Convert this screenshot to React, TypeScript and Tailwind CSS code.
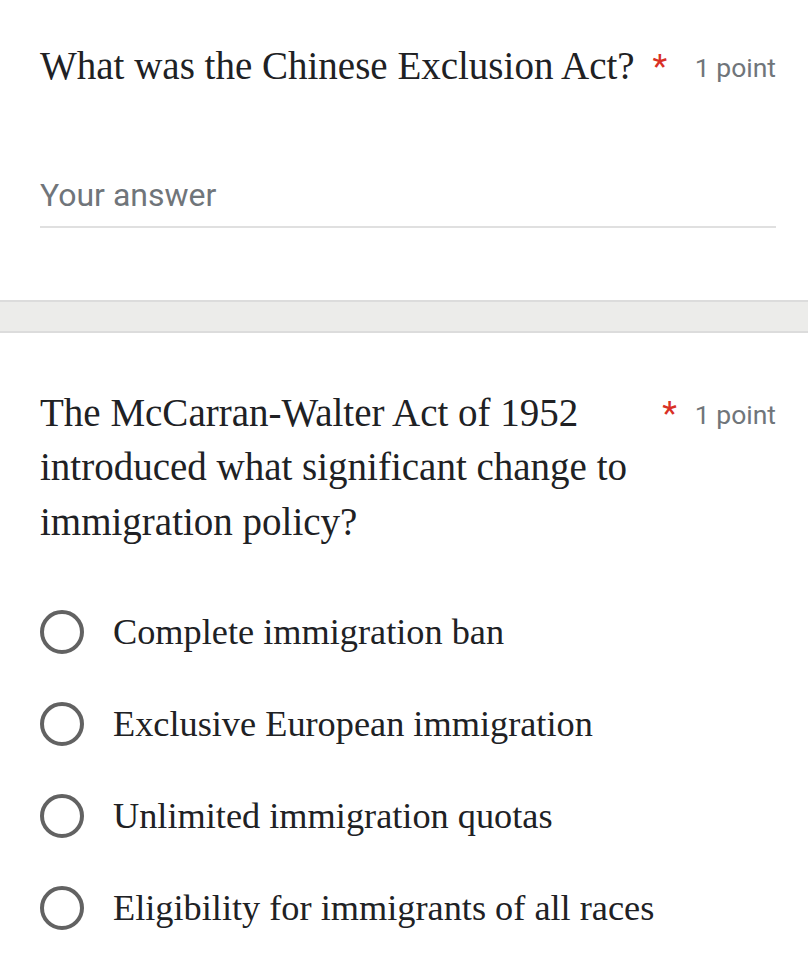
import React from 'react'

const serif = { fontFamily: '"Liberation Serif", "Times New Roman", serif' }
const sans = { fontFamily: 'Roboto, "Liberation Sans", Arial, sans-serif' }

const options = [
  'Complete immigration ban',
  'Exclusive European immigration',
  'Unlimited immigration quotas',
  'Eligibility for immigrants of all races',
]

function QuestionHeader({ title }: { title: string }) {
  return (
    <div className="flex items-start">
      <div className="min-w-0 shrink text-[39px] leading-[54.5px] text-[#202124]" style={serif}>
        {title}
      </div>
      <span className="ml-[18px] shrink-0 text-[34px] leading-[54.5px] text-[#d93025]" style={sans}>
        *
      </span>
      <span className="ml-auto shrink-0 whitespace-nowrap pl-[18px] pt-[2px] text-[26.5px] leading-[54.5px] text-[#70757a]" style={sans}>
        1 point
      </span>
    </div>
  )
}

export default function App() {
  return (
    <div className="min-h-screen w-full bg-white">
      {/* Short answer question */}
      <div className="pl-[40px] pr-[32px] pt-[39px] pb-[72px]">
        <QuestionHeader title="What was the Chinese Exclusion Act?" />
        <div className="mt-[80px] border-b-2 border-[#e0e0e0] pb-[12px]">
          <div className="text-[32px] leading-[38px] text-[#70757a]" style={sans}>
            Your answer
          </div>
        </div>
      </div>

      {/* Divider between cards */}
      <div className="h-[33px] border-y-2 border-[#dcdcdc] bg-[#ececea]" />

      {/* Multiple choice question */}
      <div className="pl-[40px] pr-[32px] pt-[53px]">
        <QuestionHeader title="The McCarran-Walter Act of 1952 introduced what significant change to immigration policy?" />
        <div className="mt-[37px] flex flex-col">
          {options.map((opt) => (
            <div key={opt} className="flex h-[92px] items-center">
              <div className="h-[44px] w-[44px] shrink-0 rounded-full border-[4px] border-[#626262]" />
              <div className="ml-[29px] text-[36.3px] leading-[44px] text-[#202124]" style={serif}>
                {opt}
              </div>
            </div>
          ))}
        </div>
      </div>
    </div>
  )
}
